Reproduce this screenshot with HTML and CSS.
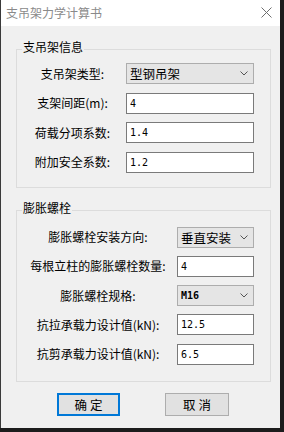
FILE: index.html
```html
<!DOCTYPE html>
<html lang="zh">
<head>
<meta charset="utf-8">
<link rel="stylesheet" href="styles.css">
</head>
<body>
<div class="window">
  <div class="titlebar">
    <span class="title">支吊架力学计算书</span>
    <svg class="close" width="11" height="11" viewBox="0 0 11 11"><path d="M0.5 0.5 L10.5 10.5 M10.5 0.5 L0.5 10.5" stroke="#6e6e6e" stroke-width="1" fill="none"/></svg>
  </div>
  <div class="content">
    <div class="group group-a">
      <div class="group-title">支吊架信息</div>
      <div class="rows rows-a">
        <label class="lbl">支吊架类型:</label>
        <div class="combo"><span>型钢吊架</span><svg width="8" height="5" viewBox="0 0 8 5"><path d="M0.5 0.5 L4 4 L7.5 0.5" stroke="#555" fill="none"/></svg></div>
        <label class="lbl">支架间距(m):</label>
        <div class="field">4</div>
        <label class="lbl">荷载分项系数:</label>
        <div class="field">1.4</div>
        <label class="lbl">附加安全系数:</label>
        <div class="field">1.2</div>
      </div>
    </div>
    <div class="group group-b">
      <div class="group-title">膨胀螺栓</div>
      <div class="rows rows-b">
        <label class="lbl">膨胀螺栓安装方向:</label>
        <div class="combo"><span>垂直安装</span><svg width="8" height="5" viewBox="0 0 8 5"><path d="M0.5 0.5 L4 4 L7.5 0.5" stroke="#555" fill="none"/></svg></div>
        <label class="lbl">每根立柱的膨胀螺栓数量:</label>
        <div class="field">4</div>
        <label class="lbl">膨胀螺栓规格:</label>
        <div class="combo"><span class="mono bold">M16</span><svg width="8" height="5" viewBox="0 0 8 5"><path d="M0.5 0.5 L4 4 L7.5 0.5" stroke="#555" fill="none"/></svg></div>
        <label class="lbl">抗拉承载力设计值(kN):</label>
        <div class="field">12.5</div>
        <label class="lbl">抗剪承载力设计值(kN):</label>
        <div class="field">6.5</div>
      </div>
    </div>
    <div class="buttons">
      <button class="btn btn-default">确 定</button>
      <button class="btn">取 消</button>
    </div>
  </div>
</div>
</body>
</html>
```
FILE: styles.css
```css
html, body {
  margin: 0;
  padding: 0;
  background: #1c1c1c;
}
body {
  font-family: "Noto Sans CJK SC", "Noto Sans", sans-serif;
  font-size: 12px;
  color: #000;
}
.window {
  width: 280px;
  height: 428px;
  box-sizing: border-box;
  border-left: 1px solid #3a3a3a;
  background: #f0f0f0;
  display: flex;
  flex-direction: column;
}
.titlebar {
  height: 26px;
  flex: none;
  background: #fff;
  display: flex;
  align-items: center;
  justify-content: space-between;
  padding: 0 8px 0 5px;
}
.title {
  color: #8a8a8a;
  font-size: 12px;
  line-height: 16px;
}
.close {
  display: block;
  margin-top: -1px;
}
.content {
  padding: 0 9px 0 15px;
  display: flex;
  flex-direction: column;
}
.group {
  border: 1px solid #dcdcdc;
  padding: 0 16px 14px 0;
}
.group-a {
  margin-top: 23px;
}
.group-b {
  margin-top: 22px;
  padding-bottom: 16px;
}
.group-title {
  width: fit-content;
  background: #f0f0f0;
  line-height: 16px;
  padding: 0 1px;
  margin: -11px 0 8px 5px;
}
.group-b .group-title {
  margin-bottom: 11px;
}
.rows {
  display: grid;
  align-items: center;
}
.rows-a {
  grid-template-columns: 1fr 128px;
  grid-auto-rows: 21px;
  row-gap: 8.5px;
}
.rows-b {
  grid-template-columns: 1fr 77px;
  grid-auto-rows: 21px;
  row-gap: 8.3px;
}
.lbl {
  text-align: center;
  white-space: nowrap;
  line-height: 16px;
  padding-left: 2px;
}
.field {
  height: 21px;
  box-sizing: border-box;
  background: #fff;
  border: 1px solid #7a7a7a;
  padding: 0 3px;
  font-family: "DejaVu Sans Mono", "Liberation Mono", monospace;
  font-size: 10px;
  line-height: 19px;
}
.combo {
  height: 21px;
  box-sizing: border-box;
  background: #e5e5e5;
  border: 1px solid #adadad;
  padding: 0 5px 0 3px;
  display: flex;
  align-items: center;
  justify-content: space-between;
  font-size: 12.5px;
}
.combo svg {
  display: block;
}
.mono {
  font-family: "DejaVu Sans Mono", "Liberation Mono", monospace;
  font-size: 10px;
}
.bold {
  font-weight: bold;
}
.buttons {
  margin-top: 11px;
  padding-left: 41px;
  display: flex;
  gap: 45px;
}
.btn {
  height: 23px;
  width: 64px;
  box-sizing: border-box;
  background: #e1e1e1;
  border: 1px solid #adadad;
  margin: 0;
  padding: 0;
  font-family: "Noto Sans CJK SC", sans-serif;
  font-size: 12.5px;
  color: #000;
  line-height: 19px;
}
.btn-default {
  width: 63px;
  border: 2px solid #0078d7;
}
```
